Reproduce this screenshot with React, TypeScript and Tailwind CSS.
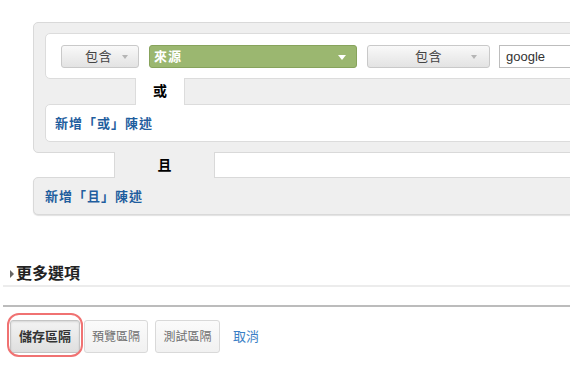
export default function App() {
  return (
    <div className="w-[570px] h-[369px] overflow-hidden bg-white font-['Liberation_Sans','Noto_Sans_CJK_TC',sans-serif] text-[#333]">
      <div className="pt-[22px] pl-[33px]">
        <div className="w-[600px]">
          {/* OR group panel */}
          <div className="bg-[#efefef] border border-[#d9d9d9] rounded-[5px] pt-[10px] pb-[10px] pl-[11px]">
            <div className="bg-white border border-[#dcdcdc] rounded-[5px] h-[46px] pl-[15px] pt-[11px] flex items-start">
              <div className="relative shrink-0 w-[78px] h-[23px] rounded-[3px] border border-[#c9c9c9] bg-linear-to-b from-[#f9f9f9] to-[#e3e3e3] flex items-center justify-center text-[13px] text-[#444] tracking-[0.5px]">
                <span className="-ml-[3px]">包含</span>
                <span className="absolute right-[10px] top-[9px] w-0 h-0 border-x-[3px] border-t-[4px] border-x-transparent border-t-[#b5b5b5]" />
              </div>
              <div className="relative shrink-0 ml-[10px] w-[208px] h-[23px] rounded-[3px] border border-[#87a35c] bg-[#9bb770] flex items-center pl-[4px] text-[13px] font-bold text-white tracking-[1px]">
                來源
                <span className="absolute right-[10px] top-[9px] w-0 h-0 border-x-[4px] border-t-[5px] border-x-transparent border-t-white" />
              </div>
              <div className="relative shrink-0 ml-[10px] w-[123px] h-[23px] rounded-[3px] border border-[#c9c9c9] bg-linear-to-b from-[#f9f9f9] to-[#e3e3e3] flex items-center justify-center text-[13px] text-[#444] tracking-[0.5px]">
                包含
                <span className="absolute right-[12px] top-[9px] w-0 h-0 border-x-[3px] border-t-[4px] border-x-transparent border-t-[#b5b5b5]" />
              </div>
              <div className="shrink-0 ml-[9px] w-[140px] h-[23px] border border-[#bdbdbd] bg-white flex items-center pl-[6px] text-[13px] text-[#333]">
                google
              </div>
            </div>
            <div className="flex h-[25px]">
              <div className="w-[90px] shrink-0" />
              <div className="relative z-10 -my-px shrink-0 w-[50px] bg-white border-x border-[#dcdcdc] flex items-center justify-center text-[14px] font-bold text-black">
                或
              </div>
              <div className="flex-1" />
            </div>
            <div className="bg-white border border-[#dcdcdc] rounded-[5px] h-[38px] pl-[9px] flex items-center pt-[2px] text-[13px] font-bold text-[#1f5e9e] tracking-[1px]">
              新增「或」陳述
            </div>
          </div>
          {/* AND connector */}
          <div className="flex h-[24px]">
            <div className="w-[81px] shrink-0" />
            <div className="relative z-10 -my-px shrink-0 w-[101px] bg-[#efefef] border-x border-[#d9d9d9] flex items-center justify-center text-[14px] font-bold text-black">
              且
            </div>
            <div className="flex-1" />
          </div>
          <div className="bg-[#efefef] border border-[#d9d9d9] rounded-[5px] h-[38px] pl-[11px] flex items-center pt-[2px] text-[13px] font-bold text-[#1f5e9e] tracking-[1px] shadow-[0_1px_1px_rgba(0,0,0,0.12)]">
            新增「且」陳述
          </div>
        </div>
      </div>

      {/* More options */}
      <div className="ml-[3px] mt-[47px]">
        <div className="h-[25px] border-b-2 border-[#ececec] flex items-center pl-[7px]">
          <span className="w-0 h-0 border-y-[4px] border-l-[4px] border-y-transparent border-l-[#666]" />
          <span className="ml-[2px] text-[16px] font-bold text-[#222] leading-[20px]">更多選項</span>
        </div>
        <div className="mt-[18px] h-[2px] bg-[#bcbcbc]" />
        <div className="mt-[13px] pl-[7px] flex items-center">
          <div className="relative shrink-0">
            <button className="w-[70px] h-[33px] rounded-[3px] border border-[#c4c4c4] bg-linear-to-b from-[#f3f3f3] to-[#dfdfdf] shadow-[inset_0_1px_2px_rgba(0,0,0,0.12)] text-[13px] font-bold text-[#333]">
              儲存區隔
            </button>
            <span className="pointer-events-none absolute -left-[3px] -right-[3px] -top-[7px] -bottom-[4px] border-2 border-[#f07272] rounded-[12px]" />
          </div>
          <button className="shrink-0 ml-[4px] w-[64px] h-[33px] rounded-[3px] border border-[#d9d9d9] bg-linear-to-b from-[#fbfbfb] to-[#f1f1f1] text-[12px] text-[#6f6f6f]">
            預覽區隔
          </button>
          <button className="shrink-0 ml-[7px] w-[65px] h-[33px] rounded-[3px] border border-[#d9d9d9] bg-linear-to-b from-[#fbfbfb] to-[#f1f1f1] text-[12px] text-[#6f6f6f]">
            測試區隔
          </button>
          <span className="ml-[13px] text-[13px] text-[#3a7fc6]">取消</span>
        </div>
      </div>
    </div>
  );
}
